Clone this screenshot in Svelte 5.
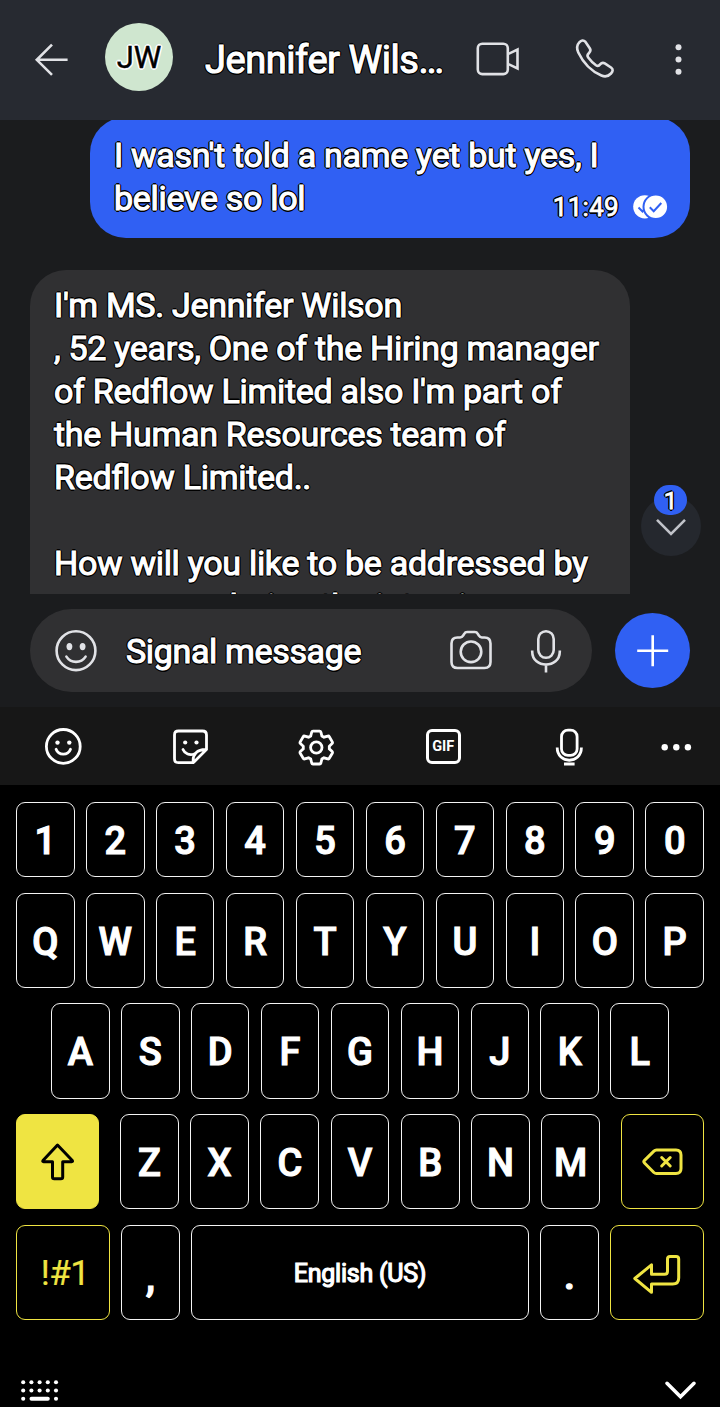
<script>
  const digits = [...'1234567890'];
  const top = [...'QWERTYUIOP'];
  const home = [...'ASDFGHJKL'];
  const bottom = [...'ZXCVBNM'];
</script>

<div class="screen">
  <header>
    <svg class="back" width="36" height="36" viewBox="0 0 36 36"><path d="M19 2.700 3.800 17.800 19 32.900M3.800 17.800H34.600" /></svg>
    <div class="avatar">JW</div>
    <h1>Jennifer Wils…</h1>
    <svg class="video" width="46" height="40" viewBox="0 0 46 40">
      <rect x="3.800" y="3.700" width="30" height="30.400" rx="4.500" />
      <path d="M33.800 14.200 43.500 9.500V28.500L33.800 23.800" />
    </svg>
    <svg class="phone" width="42" height="42" viewBox="0 0 42 42">
      <path d="M5.300 4.300C7.200 2.200 9.600 1.800 11.200 3.600L15.900 10.500C17 12.300 16.500 13.600 14.800 15.200C13.200 16.700 13 17.900 14.200 19.400C16.500 22.500 19 25 22 27.200C23.600 28.300 24.800 28.100 26.100 26.400C27.600 24.600 29 24.300 30.800 25.400L37.300 29.700C39.300 31.200 39 33.500 37 35.500C34.500 38.200 31 39.200 27.400 37.500C18 33.500 9.300 25 4.300 14.500C2.500 10.500 2.600 7.200 5.300 4.300Z" />
    </svg>
    <svg class="more" width="8" height="34" viewBox="0 0 8 34"><circle cx="3.500" cy="4.300" r="3" /><circle cx="3.500" cy="16.500" r="3" /><circle cx="3.500" cy="28.700" r="3" /></svg>
  </header>

  <main>
    <div class="bubble sent">
      <p>I wasn't told a name yet but yes, I<br />believe so lol</p>
      <div class="meta">
        <span>11:49</span>
        <svg width="36" height="26" viewBox="0 0 36 26">
          <circle cx="12.800" cy="12.800" r="11.600" fill="#fff" />
          <path d="m6.500 13.500 4 4 7-8" fill="none" stroke="#3060f3" stroke-width="2" />
          <circle cx="23.800" cy="12.800" r="12.300" fill="#fff" stroke="#3060f3" stroke-width="2" />
          <path d="m17.800 13.300 3.900 3.900 7.600-8.200" fill="none" stroke="#3060f3" stroke-width="2" />
        </svg>
      </div>
    </div>
    <div class="bubble received">
      <p>I'm MS. Jennifer Wilson<br />, 52 years, One of the Hiring manager<br />of Redflow Limited also I'm part of<br />the Human Resources team of<br />Redflow Limited..<br /><br />How will you like to be addressed by<br />your name during the interview</p>
    </div>
    <div class="jump">
      <span class="count">1</span>
      <svg width="34" height="20" viewBox="0 0 34 20"><path d="m3 1.800 14 14 14-14" /></svg>
    </div>
  </main>

  <section class="composer">
    <div class="field">
      <svg width="44" height="44" viewBox="0 0 44 44">
        <circle cx="22" cy="21.700" r="19.400" />
        <ellipse class="solid" cx="15.400" cy="17.600" rx="2.900" ry="3.700" /><ellipse class="solid" cx="28.600" cy="17.600" rx="2.900" ry="3.700" />
        <path d="M12.400 27.600c4.500 7 14.700 7 19.200 0" stroke-linecap="round" />
      </svg>
      <span class="placeholder">Signal message</span>
      <svg width="46" height="44" viewBox="0 0 46 44">
        <path d="M3.500 14.500q0-6 6-6h2.600q2 0 3-1.800l1.100-1.900q1-1.800 3-1.800h7.600q2 0 3 1.800l1.100 1.900q1 1.800 3 1.800h2.600q6 0 6 6v18.500q0 6-6 6h-27q-6 0-6-6z" />
        <circle cx="23" cy="22.800" r="10.300" />
      </svg>
      <svg width="34" height="46" viewBox="0 0 34 46">
        <rect x="9.300" y="3.200" width="15.400" height="26.600" rx="7.700" />
        <path d="M3.200 22.500v1c0 17.500 27.600 17.500 27.600 0v-1M17 36.500v8" />
      </svg>
    </div>
    <button class="attach" aria-label="Attach"><svg width="36" height="36" viewBox="0 0 36 36"><path d="M17.700 2.200v31M2.200 17.700h31" /></svg></button>
  </section>

  <nav>
    <svg width="40" height="40" viewBox="0 0 40 40">
      <circle cx="20.300" cy="19.400" r="16.900" />
      <circle class="solid" cx="14.500" cy="15.600" r="2.200" /><circle class="solid" cx="26.300" cy="15.600" r="2.200" />
      <path d="M13.100 22.300c2.400 6.500 12 6.500 14.400 0" stroke-linecap="round" />
    </svg>
    <svg width="40" height="40" viewBox="0 0 40 40">
      <path d="M21.500 35.700H8.500q-4 0-4-4V8q0-4 4-4h24q4 0 4 4v14.500L23.300 35.700h-1.800M23.300 35.200c-1-8 4-13 13-12.700" />
      <circle class="solid" cx="15.200" cy="15.500" r="2.100" /><circle class="solid" cx="26.500" cy="15.500" r="2.100" />
      <path d="M13 22.500c1.800 4.500 6.800 6 11.200 4.500" stroke-linecap="round" />
    </svg>
    <svg width="40" height="40" viewBox="0 0 40 40">
      <path d="M17 4.100h6.600q1 0 1.300 1l1 3.900 2 1.200 3.900-1.100q1-.3 1.500.6l3 5.200q.5.900-.2 1.600l-2.800 2.800v2.500l2.800 2.700q.7.800.2 1.700l-3 5.100q-.5.900-1.500.6l-3.900-1.100-2 1.200-1 4q-.3 1-1.300 1H17q-1 0-1.300-1l-1-4-2.100-1.200-3.900 1.100q-1 .3-1.500-.6l-3-5.100q-.5-.9.200-1.700l2.900-2.700v-2.500l-2.900-2.800q-.7-.7-.2-1.600l3-5.200q.5-.9 1.500-.6l3.900 1.100 2.100-1.200 1-3.900q.3-1 1.300-1Z" />
      <circle cx="20.300" cy="20.500" r="5.700" />
    </svg>
    <div class="gif">GIF</div>
    <svg width="40" height="40" viewBox="0 0 40 40">
      <rect x="12.500" y="3.200" width="15.600" height="25.200" rx="6.500" />
      <path d="M8.200 20.500c0 17 24.200 17 24.200 0M15 37h10.600" />
    </svg>
    <svg width="40" height="40" viewBox="0 0 40 40"><circle class="solid" cx="8.700" cy="20.200" r="3.200" /><circle class="solid" cx="20.300" cy="20.200" r="3.200" /><circle class="solid" cx="31.900" cy="20.200" r="3.200" /></svg>
  </nav>

  <section class="keyboard">
    <div class="row ten short">{#each digits as k}<div class="key">{k}</div>{/each}</div>
    <div class="row ten">{#each top as k}<div class="key">{k}</div>{/each}</div>
    <div class="row nine">{#each home as k}<div class="key">{k}</div>{/each}</div>
    <div class="row letters">
      <div class="key shift"><svg width="38" height="42" viewBox="0 0 38 42"><path d="M18.500 4 4 19.500q-.8 1.200.6 1.200H13.500V36q0 1.800 1.800 1.800h6.600q1.800 0 1.800-1.800V20.700h9q1.400 0 .6-1.200Z" /></svg></div>
      <div class="middle">{#each bottom as k}<div class="key">{k}</div>{/each}</div>
      <div class="key accent"><svg width="44" height="32" viewBox="0 0 44 32"><path d="M15.500 4H35q5 0 5 5v13.500q0 5-5 5H15.500q-1.500 0-2.600-1L3.500 17q-1.300-1.300 0-2.600l9.400-9.300q1.100-1.100 2.600-1.100ZM20.700 11.500l8.500 8.500M29.200 11.500l-8.500 8.500" /></svg></div>
    </div>
    <div class="row last">
      <div class="key accent symbols">!#1</div>
      <div class="key mark">,</div>
      <div class="key space">English (US)</div>
      <div class="key mark dot">.</div>
      <div class="key accent"><svg width="50" height="44" viewBox="0 0 50 44"><path d="M2.800 27.500 19.500 13.800V23.300H32.500q3 0 3-3V8q0-2.600 2.600-2.600h6q2.600 0 2.600 2.600v19q0 6-6 6H19.500v8.300Z" /></svg></div>
    </div>
    <footer>
      <svg width="40" height="24" viewBox="0 0 40 24">
        {#each [0, 1, 2, 3, 4] as c}
          <circle cx={3.200 + c * 8.200} cy="3.200" r="2.050" /><circle cx={3.200 + c * 8.200} cy="11.500" r="2.050" />
        {/each}
        <circle cx="3.200" cy="19.700" r="2.050" /><circle cx="36" cy="19.700" r="2.050" />
        <rect x="9.500" y="17.700" width="20.300" height="4.100" rx="2" />
      </svg>
      <svg class="hide" width="34" height="22" viewBox="0 0 34 22"><path d="m3 4.300 13.500 13.500L30 4.300" /></svg>
    </footer>
  </section>
</div>

<style>
  :global(body) { background: #000; }
  .screen { width: 720px; height: 1407px; overflow: hidden; background: #1b1c1e; color: #fff; font-family: Roboto, sans-serif; }
  .screen * { box-sizing: border-box; }
  svg { display: block; flex: none; fill: none; stroke: #e1e2e6; stroke-width: 2.6; overflow: visible; }
  h1, p { margin: 0; font-weight: 400; }
  h1, p, .avatar, .meta span, .count, .placeholder {
    --edge: #000;
    -webkit-text-stroke: 1.1px currentColor;
    text-shadow: 1.7px 0 0 var(--edge), -1.7px 0 0 var(--edge), 0 1.7px 0 var(--edge), 0 -1.7px 0 var(--edge), 1.2px 1.2px 0 var(--edge), -1.2px 1.2px 0 var(--edge), 1.2px -1.2px 0 var(--edge), -1.2px -1.2px 0 var(--edge);
    white-space: nowrap;
  }

  header { height: 120px; background: #272a31; display: flex; align-items: center; padding-left: 33px; }
  .avatar { --edge: #fff; width: 68px; height: 68px; margin: 0 32px 6px 36px; border-radius: 50%; background: #cfe6cf; color: #000; font-size: 31px; line-height: 70px; text-align: center; -webkit-text-stroke-width: 0.4px; }
  h1 { width: 238px; font-size: 38px; line-height: 48px; letter-spacing: -0.45px; }
  .video { margin-left: 31px; }
  .phone { margin-left: 54px; margin-top: -3px; }
  .more { margin-left: 59px; fill: #e1e2e6; stroke: none; }

  main { height: 474px; overflow: hidden; position: relative; background: #1b1c1e; }
  .bubble { width: 600px; border-radius: 36px; font-size: 34px; line-height: 43px; letter-spacing: -0.3px; font-feature-settings: "liga" 1; }
  .sent { margin: -3px 0 0 90px; height: 121px; padding: 17px 24px; background: #3060f3; position: relative; }
  .meta { position: absolute; right: 22px; bottom: 17px; display: flex; align-items: center; gap: 13px; font-size: 26px; line-height: 28px; letter-spacing: 0.3px; }
  .meta svg { stroke: none; }
  .meta span { -webkit-text-stroke-width: 0.8px; }
  .received { margin: 32px 0 0 30px; height: 400px; padding: 14px 24px; background: #303032; }
  .jump { position: absolute; left: 641px; top: 376px; width: 60px; height: 60px; border-radius: 50%; background: #25282e; display: flex; justify-content: center; padding-top: 22px; }
  .jump svg { stroke: #c1c3c9; }
  .count { position: absolute; left: 13px; top: -11px; width: 33px; height: 30px; border-radius: 15px; background: #3060f3; font-size: 24px; line-height: 33px; text-align: center; -webkit-text-stroke-width: 0.8px; }

  .composer { height: 113px; display: flex; align-items: center; padding: 0 30px; justify-content: space-between; }
  .field { width: 562px; height: 83px; border-radius: 42px; background: #303032; display: flex; align-items: center; padding-left: 23.500px; }
  .placeholder { width: 235px; margin: 1px 87px 0 28.500px; font-size: 34px; line-height: 43px; letter-spacing: -0.35px; }
  .field svg + svg { margin-left: 35px; }
  svg .solid { fill: #e1e2e6; stroke: none; }
  .attach { width: 75px; height: 75px; padding: 0; border: 0; border-radius: 50%; background: #3060f3; display: grid; place-items: center; }
  .attach svg { stroke: #fff; stroke-width: 2.6; }

  nav { height: 78px; background: #171717; display: grid; grid-template-columns: repeat(5, 126.500px) 87.500px; place-items: center; padding-top: 1px; }
  nav svg { stroke: #fff; stroke-width: 2.800; }
  nav svg .solid { fill: #fff; }
  .gif { width: 35px; height: 35px; margin-left: 1px; border: 3px solid #fff; border-radius: 6px; font-size: 14.500px; font-weight: 700; line-height: 30px; text-align: center; }

  .keyboard { height: 622px; background: #000; padding: 17px 16px 0; display: flex; flex-direction: column; gap: 15.600px; }
  .row { display: grid; gap: 11.300px; height: 95.200px; flex: none; }
  .row.short { height: 75px; }
  .ten { grid-template-columns: repeat(10, 1fr); }
  .nine { grid-template-columns: repeat(9, 1fr); padding: 0 35px; }
  .letters { grid-template-columns: 83px 480px 83px; gap: 21px; }
  .middle { display: grid; grid-template-columns: repeat(7, 1fr); gap: 11.300px; }
  .last { grid-template-columns: 94px 59px 338px 59px 94px; gap: 11px; }
  .key { border: 1px solid #f4f4f4; border-radius: 9px; display: grid; place-items: center; font-size: 38px; font-weight: 500; -webkit-text-stroke: 1.100px currentColor; line-height: 46px; padding: 3px 0 0; }
  .accent { border-color: #efe442; color: #efe442; }
  .accent svg { stroke: #efe442; stroke-width: 3; stroke-linejoin: round; stroke-linecap: round; margin-top: -2px; }
  .shift { background: #efe442; border-color: #efe442; }
  .shift svg { stroke: #000; stroke-width: 3; stroke-linejoin: round; margin-top: -3px; }
  .symbols { font-size: 35px; font-weight: 400; -webkit-text-stroke-width: 0.2px; padding-left: 4px; letter-spacing: -0.5px; }
  .mark { padding-top: 9px; font-size: 42px; }
  .dot { padding-top: 5px; font-size: 41px; }
  .space { font-size: 25px; font-weight: 400; -webkit-text-stroke-width: 1.2px; padding-top: 3px; letter-spacing: -0.25px; }
  footer { display: flex; justify-content: space-between; padding: 43px 6px 0 4px; }
  footer svg { fill: #fff; stroke: none; }
  footer .hide { fill: none; stroke: #fff; stroke-width: 3.600; stroke-linecap: round; }
</style>
